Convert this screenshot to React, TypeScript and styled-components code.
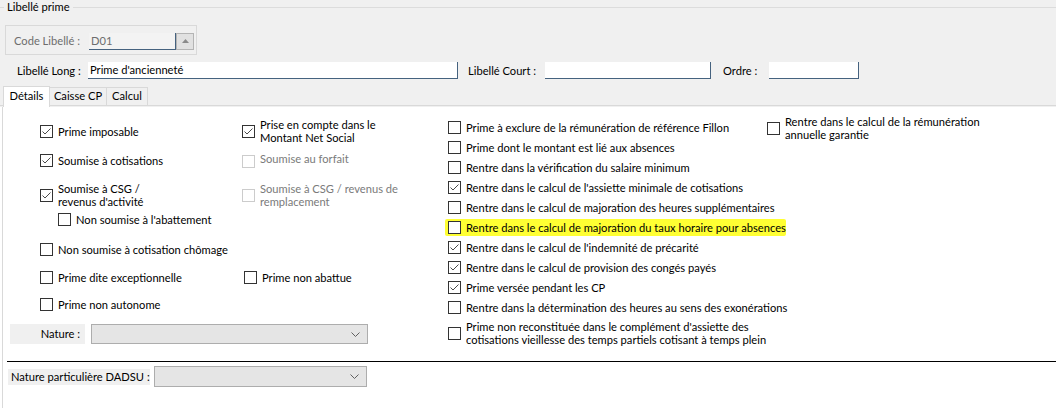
import React from "react";
import styled, { createGlobalStyle } from "styled-components";

const GlobalStyle = createGlobalStyle`
  html, body {
    margin: 0;
    padding: 0;
    background: #ffffff;
  }
  body {
    font-family: Lato, "Noto Sans", sans-serif;
    font-size: 11.15px;
    color: #000;
  }
`;

const Screen = styled.div`
  width: 1056px;
  height: 408px;
  overflow: hidden;
  display: flex;
  flex-direction: column;
  background: #fff;
`;

const HeaderPanel = styled.div`
  height: 107px;
  background: #f0f0f0;
  display: flex;
  flex-direction: column;
`;

const GroupTitle = styled.div`
  display: flex;
  align-items: center;
  gap: 3px;
  height: 14px;
  line-height: 14px;
  &::before {
    content: "";
    width: 4px;
    height: 1px;
    background: #dcdcdc;
  }
  &::after {
    content: "";
    flex: 1;
    height: 1px;
    background: #dcdcdc;
  }
`;

const CodeBox = styled.div`
  margin: 11px 0 0 5px;
  width: 192px;
  height: 30px;
  box-sizing: border-box;
  border: 1px solid #d9d9d9;
  display: flex;
  align-items: center;
  padding: 2px 0 0 8px;
`;

const FieldLabel = styled.span<{ $w: number; $ml?: number; $muted?: boolean }>`
  width: ${(p) => p.$w}px;
  margin-left: ${(p) => p.$ml ?? 0}px;
  flex: none;
  line-height: 14px;
  color: ${(p) => (p.$muted ? "#6d6d6d" : "#000")};
  white-space: nowrap;
`;

const TextInput = styled.div<{ $w: number; $disabled?: boolean }>`
  width: ${(p) => p.$w}px;
  height: 17px;
  box-sizing: border-box;
  flex: none;
  background: ${(p) => (p.$disabled ? "#f3f3f3" : "#ffffff")};
  border-right: 1px solid #45627f;
  border-bottom: 1px solid #45627f;
  padding-left: 2px;
  line-height: 16px;
  color: ${(p) => (p.$disabled ? "#6d6d6d" : "#000")};
  white-space: nowrap;
  overflow: hidden;
`;

const SpinButton = styled.div`
  width: 18px;
  height: 17px;
  box-sizing: border-box;
  flex: none;
  background: #e1e1e1;
  border: 1px solid #b4b4b4;
  display: flex;
  align-items: center;
  justify-content: center;
`;

const FieldRow = styled.div`
  display: flex;
  align-items: center;
  height: 17px;
  margin-top: 7px;
  padding-left: 17px;
`;

const TabBar = styled.div`
  margin-top: auto;
  display: flex;
  align-items: flex-end;
  height: 21px;
  &::before {
    content: "";
    width: 3px;
    height: 1px;
    background: #d9d9d9;
    margin-bottom: 1px;
  }
  &::after {
    content: "";
    flex: 1;
    height: 1px;
    background: #d9d9d9;
    margin-bottom: 1px;
  }
`;

const Tab = styled.div<{ $w: number; $active?: boolean }>`
  width: ${(p) => p.$w}px;
  box-sizing: border-box;
  text-align: center;
  line-height: 14px;
  white-space: nowrap;
  border: 1px solid #d9d9d9;
  ${(p) =>
    p.$active
      ? `
    height: 21px;
    background: #ffffff;
    border-bottom: none;
    padding-top: 2px;
  `
      : `
    height: 19px;
    margin-bottom: 1px;
    background: #f0f0f0;
    border-left: none;
    padding-top: 1px;
  `}
`;

const Content = styled.div`
  flex: 1;
  margin-left: 2px;
  border-left: 1px solid #d9d9d9;
  display: flex;
  flex-direction: column;
`;

const MainSection = styled.div`
  height: 254px;
  box-sizing: border-box;
  padding-top: 8px;
  display: flex;
`;

const LeftBlock = styled.div`
  width: 445px;
  flex: none;
  display: flex;
  flex-direction: column;
`;

const CheckRow = styled.div<{ $mt: number; $h: number }>`
  display: grid;
  grid-template-columns: 202px 1fr;
  align-items: center;
  height: ${(p) => p.$h}px;
  margin-top: ${(p) => p.$mt}px;
  padding-left: 37px;
`;

const RightCol = styled.div`
  width: 319px;
  flex: none;
  display: flex;
  flex-direction: column;
  padding-top: 2px;
`;

const RightRow = styled.div<{ $h?: number; $mt?: number; $hl?: boolean }>`
  height: ${(p) => p.$h ?? 20}px;
  margin-top: ${(p) => p.$mt ?? 0}px;
  display: flex;
  align-items: center;
  position: relative;
  ${(p) =>
    p.$hl
      ? `
    &::before {
      content: "";
      position: absolute;
      left: -3px;
      top: 2px;
      bottom: 1px;
      width: 341px;
      background: #ffff33;
      border-radius: 2px;
      filter: blur(0.6px);
    }
  `
      : ""}
`;

const FarRight = styled.div`
  flex: 1;
`;

const Item = styled.div<{ $top?: boolean; $indent?: number }>`
  display: flex;
  align-items: ${(p) => (p.$top ? "flex-start" : "center")};
  align-self: ${(p) => (p.$top ? "stretch" : "center")};
  gap: 5px;
  margin-left: ${(p) => p.$indent ?? 0}px;
  position: relative;
`;

const Box = styled.span<{ $disabled?: boolean; $offset?: number }>`
  flex: none;
  width: 13px;
  height: 13px;
  box-sizing: border-box;
  margin-top: ${(p) => p.$offset ?? 0}px;
  border: 1px solid ${(p) => (p.$disabled ? "#cccccc" : "#333333")};
  background: #ffffff;
  display: flex;
  align-items: center;
  justify-content: center;
`;

const ItemText = styled.span<{ $disabled?: boolean }>`
  line-height: 13px;
  white-space: nowrap;
  color: ${(p) => (p.$disabled ? "#7a7a7a" : "#000")};
`;

const SelectRow = styled.div<{ $mt: number; $pl: number }>`
  display: flex;
  align-items: center;
  margin-top: ${(p) => p.$mt}px;
  padding-left: ${(p) => p.$pl}px;
`;

const SelectLabel = styled.div<{ $w: number; $h: number; $align: string }>`
  width: ${(p) => p.$w}px;
  height: ${(p) => p.$h}px;
  box-sizing: border-box;
  background: #f0f0f0;
  line-height: ${(p) => p.$h}px;
  text-align: ${(p) => p.$align};
  padding: 0 5px 0 3px;
  white-space: nowrap;
  flex: none;
`;

const Select = styled.div<{ $w: number; $h: number; $ml: number }>`
  width: ${(p) => p.$w}px;
  height: ${(p) => p.$h}px;
  margin-left: ${(p) => p.$ml}px;
  box-sizing: border-box;
  background: #e5e5e5;
  border: 1px solid #adadad;
  display: flex;
  align-items: center;
  justify-content: flex-end;
  padding-right: 7px;
  flex: none;
`;

const Divider = styled.div`
  margin-left: 4px;
  height: 1px;
  background: #000;
`;

const Tick = () => (
  <svg width="11" height="11" viewBox="0 0 11 11">
    <polyline points="1.5,5.5 4,8 9.5,2.5" fill="none" stroke="#4a4a4a" strokeWidth="1" />
  </svg>
);

const Chevron = () => (
  <svg width="9" height="5" viewBox="0 0 9 5">
    <polyline points="0.5,0.5 4.5,4.5 8.5,0.5" fill="none" stroke="#606060" strokeWidth="1" />
  </svg>
);

type CheckProps = {
  checked?: boolean;
  disabled?: boolean;
  top?: boolean;
  indent?: number;
  children: React.ReactNode;
};

const Check = ({ checked, disabled, top, indent, children }: CheckProps) => (
  <Item $top={top} $indent={indent}>
    <Box $disabled={disabled} $offset={top ? 3 : 0}>
      {checked && <Tick />}
    </Box>
    <ItemText $disabled={disabled}>{children}</ItemText>
  </Item>
);

const rightItems: { text: React.ReactNode; checked?: boolean; hl?: boolean }[] = [
  { text: "Prime à exclure de la rémunération de référence Fillon" },
  { text: "Prime dont le montant est lié aux absences" },
  { text: "Rentre dans la vérification du salaire minimum" },
  { text: "Rentre dans le calcul de l'assiette minimale de cotisations", checked: true },
  { text: "Rentre dans le calcul de majoration des heures supplémentaires" },
  { text: "Rentre dans le calcul de majoration du taux horaire pour absences", hl: true },
  { text: "Rentre dans le calcul de l'indemnité de précarité", checked: true },
  { text: "Rentre dans le calcul de provision des congés payés", checked: true },
  { text: "Prime versée pendant les CP", checked: true },
  { text: "Rentre dans la détermination des heures au sens des exonérations" },
];

export default function App() {
  return (
    <Screen>
      <GlobalStyle />
      <HeaderPanel>
        <GroupTitle>Libellé prime</GroupTitle>
        <CodeBox>
          <FieldLabel $w={75} $muted>
            Code Libellé :
          </FieldLabel>
          <TextInput $w={87} $disabled>
            D01
          </TextInput>
          <SpinButton>
            <svg width="7" height="4" viewBox="0 0 7 4">
              <polygon points="0,4 3.5,0 7,4" fill="#8a8a8a" />
            </svg>
          </SpinButton>
        </CodeBox>
        <FieldRow>
          <FieldLabel $w={71}>Libellé Long :</FieldLabel>
          <TextInput $w={370}>Prime d'ancienneté</TextInput>
          <FieldLabel $w={77} $ml={10}>
            Libellé Court :
          </FieldLabel>
          <TextInput $w={166} />
          <FieldLabel $w={46} $ml={12}>
            Ordre :
          </FieldLabel>
          <TextInput $w={90} />
        </FieldRow>
        <TabBar>
          <Tab $w={47} $active>
            Détails
          </Tab>
          <Tab $w={57}>Caisse CP</Tab>
          <Tab $w={41}>Calcul</Tab>
        </TabBar>
      </HeaderPanel>

      <Content>
        <MainSection>
          <LeftBlock>
            <CheckRow $mt={3} $h={26}>
              <Check checked>Prime imposable</Check>
              <Check checked>
                Prise en compte dans le
                <br />
                Montant Net Social
              </Check>
            </CheckRow>
            <CheckRow $mt={8} $h={17}>
              <Check checked>Soumise à cotisations</Check>
              <Check disabled top>
                Soumise au forfait
              </Check>
            </CheckRow>
            <CheckRow $mt={13} $h={26}>
              <Check checked>
                Soumise à CSG /
                <br />
                revenus d'activité
              </Check>
              <Check disabled>
                Soumise à CSG / revenus de
                <br />
                remplacement
              </Check>
            </CheckRow>
            <CheckRow $mt={5} $h={13}>
              <Check indent={18}>Non soumise à l'abattement</Check>
            </CheckRow>
            <CheckRow $mt={17} $h={13}>
              <Check>Non soumise à cotisation chômage</Check>
            </CheckRow>
            <CheckRow $mt={15} $h={13}>
              <Check>Prime dite exceptionnelle</Check>
              <Check indent={2}>Prime non abattue</Check>
            </CheckRow>
            <CheckRow $mt={14} $h={13}>
              <Check>Prime non autonome</Check>
            </CheckRow>
            <SelectRow $mt={13} $pl={7}>
              <SelectLabel $w={75} $h={20} $align="right">
                Nature :
              </SelectLabel>
              <Select $w={277} $h={20} $ml={6}>
                <Chevron />
              </Select>
            </SelectRow>
          </LeftBlock>

          <RightCol>
            {rightItems.map((it, i) => (
              <RightRow key={i} $hl={it.hl}>
                <Check checked={it.checked}>{it.text}</Check>
              </RightRow>
            ))}
            <RightRow $h={26} $mt={3}>
              <Check>
                Prime non reconstituée dans le complément d'assiette des
                <br />
                cotisations vieillesse des temps partiels cotisant à temps plein
              </Check>
            </RightRow>
          </RightCol>

          <FarRight>
            <RightRow $h={26}>
              <Check>
                Rentre dans le calcul de la rémunération
                <br />
                annuelle garantie
              </Check>
            </RightRow>
          </FarRight>
        </MainSection>

        <Divider />

        <SelectRow $mt={4} $pl={5}>
          <SelectLabel $w={142} $h={16} $align="left">
            Nature particulière DADSU :
          </SelectLabel>
          <Select $w={213} $h={21} $ml={4}>
            <Chevron />
          </Select>
        </SelectRow>
      </Content>
    </Screen>
  );
}
